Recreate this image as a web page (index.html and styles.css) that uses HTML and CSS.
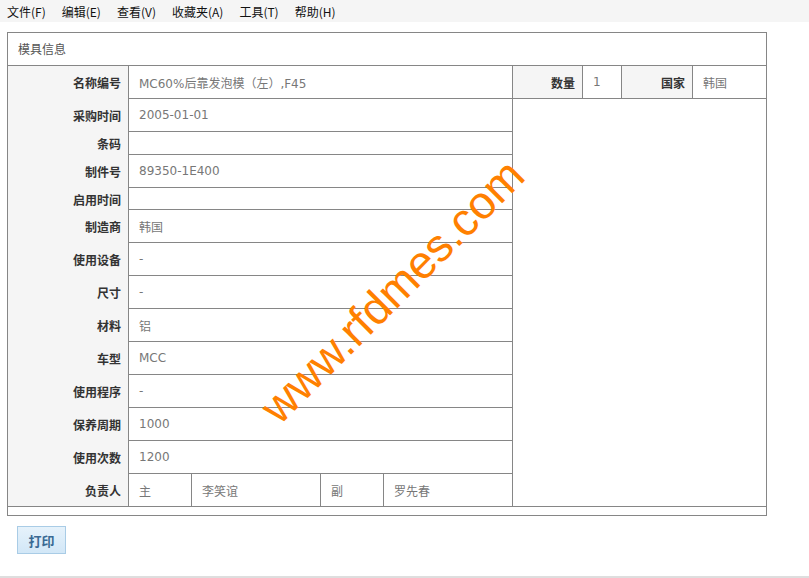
FILE: index.html
```html
<!DOCTYPE html>
<html lang="zh-CN">
<head>
    <meta charset="UTF-8">
    <title>模具信息</title>
    <link rel="stylesheet" href="styles.css">
</head>
<body>

<div class="menubar">
    <span>文件(F)</span>
    <span>编辑(E)</span>
    <span>查看(V)</span>
    <span>收藏夹(A)</span>
    <span>工具(T)</span>
    <span>帮助(H)</span>
</div>

<div class="panel">
    <div class="panel-title">模具信息</div>
    <div class="info-grid">
        <div class="lbl">名称编号</div>
        <div class="val">MC60%后靠发泡模（左）,F45</div>
        <div class="lbl side">数量</div>
        <div class="val">1</div>
        <div class="lbl side">国家</div>
        <div class="val end">韩国</div>

        <div class="photo"></div>

        <div class="lbl">采购时间</div>
        <div class="val">2005-01-01</div>
        <div class="lbl">条码</div>
        <div class="val"></div>
        <div class="lbl">制件号</div>
        <div class="val">89350-1E400</div>
        <div class="lbl">启用时间</div>
        <div class="val"></div>
        <div class="lbl">制造商</div>
        <div class="val">韩国</div>
        <div class="lbl">使用设备</div>
        <div class="val">-</div>
        <div class="lbl">尺寸</div>
        <div class="val">-</div>
        <div class="lbl">材料</div>
        <div class="val">铝</div>
        <div class="lbl">车型</div>
        <div class="val">MCC</div>
        <div class="lbl">使用程序</div>
        <div class="val">-</div>
        <div class="lbl">保养周期</div>
        <div class="val">1000</div>
        <div class="lbl">使用次数</div>
        <div class="val">1200</div>
        <div class="lbl last">负责人</div>
        <div class="val owners">
            <div class="sub narrow">主</div>
            <div class="sub wide">李笑谊</div>
            <div class="sub narrow">副</div>
            <div class="sub wide end">罗先春</div>
        </div>
    </div>
</div>

<div class="actions">
    <button class="btn">打印</button>
</div>

<div class="watermark">www.rfdmes.com</div>

<div class="statusbar"></div>

</body>
</html>
```

FILE: styles.css
```css
body {
    margin: 0;
    min-height: 100vh;
    display: flex;
    flex-direction: column;
    font-family: "DejaVu Sans", "Noto Sans CJK SC", sans-serif;
    font-size: 12px;
    color: #333;
    background: #fff;
    position: relative;
}

.menubar {
    height: 22px;
    background: #f5f5f5;
    display: flex;
    align-items: center;
    gap: 16px;
    padding-left: 7px;
    font-family: "Noto Sans CJK SC", sans-serif;
    font-size: 12px;
    color: #111;
}

.panel {
    width: 760px;
    box-sizing: border-box;
    margin: 10px 0 0 7px;
    border: 1px solid #868686;
    padding-bottom: 8px;
}

.panel-title {
    height: 32px;
    line-height: 32px;
    padding-left: 10px;
    border-bottom: 1px solid #868686;
    font-family: "Noto Sans CJK SC", sans-serif;
    color: #555;
}

.info-grid {
    display: grid;
    grid-template-columns: 121px 384px 70px 39px 71px 73px;
    grid-template-rows: 33px 33px 23px 33px 22px repeat(9, 33px);
}

.info-grid > div {
    box-sizing: border-box;
    display: flex;
    align-items: center;
}

.lbl {
    background: #f5f5f5;
    border-right: 1px solid #868686;
    justify-content: flex-end;
    padding-right: 7px;
    font-family: "Noto Sans CJK SC", sans-serif;
    font-weight: bold;
    color: #333;
}

.lbl.side {
    border-bottom: 1px solid #868686;
}

.lbl.last {
    border-bottom: 1px solid #868686;
}

.val {
    border-right: 1px solid #868686;
    border-bottom: 1px solid #868686;
    padding-left: 10px;
    color: #777;
}

.val.end {
    border-right: none;
}

.photo {
    grid-column: 3 / 7;
    grid-row: 2 / 15;
    border-bottom: 1px solid #868686;
}

.info-grid > .owners {
    padding: 0;
    align-items: stretch;
}

.sub {
    display: flex;
    align-items: center;
    box-sizing: border-box;
    padding-left: 10px;
    border-right: 1px solid #868686;
}

.sub.narrow {
    width: 63px;
}

.sub.wide {
    width: 129px;
}

.sub.end {
    width: 128px;
    border-right: none;
}

.actions {
    padding: 10px 0 0 17px;
}

.btn {
    width: 49px;
    height: 28px;
    padding: 0;
    border: 1px solid #a9cce6;
    background: linear-gradient(#e6f2fb, #d2e7f7);
    font-family: "Noto Sans CJK SC", sans-serif;
    font-size: 13px;
    font-weight: bold;
    color: #3a6a94;
    cursor: pointer;
}

.watermark {
    position: absolute;
    left: 212px;
    top: 264px;
    width: 360px;
    text-align: center;
    font-family: "Liberation Sans", Arial, sans-serif;
    font-size: 46px;
    line-height: 54px;
    color: #ff8000;
    transform: rotate(-45deg);
    pointer-events: none;
}

.statusbar {
    margin-top: auto;
    height: 2px;
    background: #dedede;
}
```
